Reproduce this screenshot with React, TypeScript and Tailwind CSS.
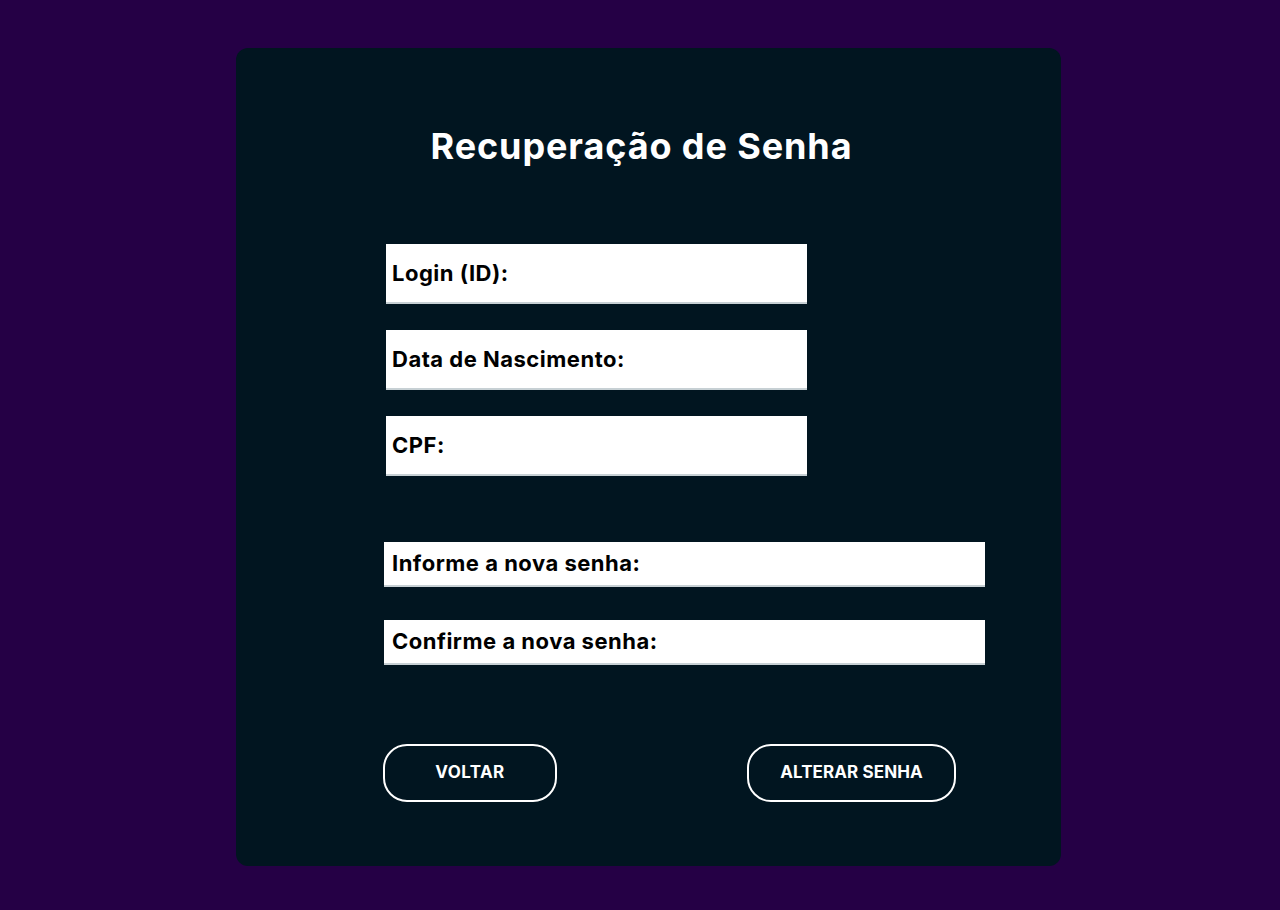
import React from "react";

const font = { fontFamily: "Inter, 'Noto Sans', sans-serif" };

function Field({ label, size }: { label: string; size: "sm" | "lg" }) {
  const cls =
    size === "sm"
      ? "w-[421px] h-[60px] ml-[150px] pl-[6px]"
      : "w-[601px] h-[45px] ml-[148px] pl-[8px]";
  return (
    <div
      className={`${cls} flex items-center bg-white border-b-2 border-[#c7d0d4] text-[22px] font-bold text-black tracking-[0.5px]`}
    >
      {label}
    </div>
  );
}

export default function App() {
  return (
    <div className="min-h-[910px] w-full bg-[#250045] pt-[48px]" style={font}>
      <div className="ml-[236px] flex h-[818px] w-[825px] flex-col rounded-xl bg-[#011520] pt-[76px]">
        <h1 className="pr-[14px] text-center text-[36px] font-bold leading-[44px] tracking-[0.9px] text-white">
          Recuperação de Senha
        </h1>

        <div className="mt-[76px] flex flex-col gap-[26px]">
          <Field label="Login (ID):" size="sm" />
          <Field label="Data de Nascimento:" size="sm" />
          <Field label="CPF:" size="sm" />
        </div>

        <div className="mt-[66px] flex flex-col gap-[33px]">
          <Field label="Informe a nova senha:" size="lg" />
          <Field label="Confirme a nova senha:" size="lg" />
        </div>

        <div className="ml-[147px] mt-[79px] flex w-[573px] justify-between">
          <button className="h-[58px] w-[174px] rounded-[24px] border-[2.5px] border-white text-[17px] font-bold tracking-[0.4px] text-white">
            VOLTAR
          </button>
          <button className="h-[58px] w-[209px] rounded-[24px] border-[2.5px] border-white text-[17px] font-bold tracking-[0.1px] text-white">
            ALTERAR SENHA
          </button>
        </div>
      </div>
    </div>
  );
}
